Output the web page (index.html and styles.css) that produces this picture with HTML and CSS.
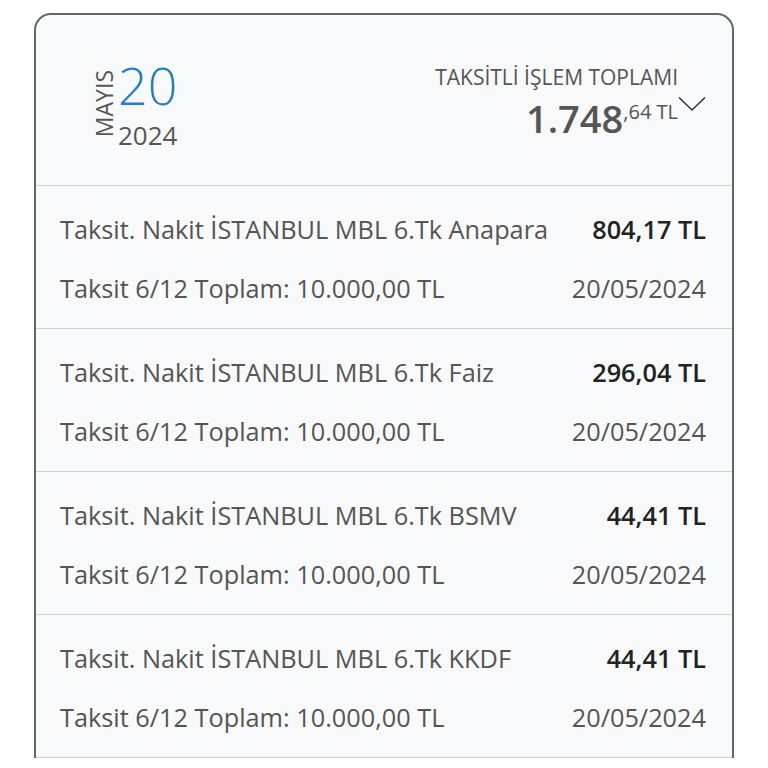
FILE: index.html
```html
<!DOCTYPE html>
<html lang="tr">
<head>
<meta charset="utf-8">
<link rel="stylesheet" href="styles.css">
</head>
<body>
<div class="card">
  <div class="header">
    <div class="date">
      <div class="month">MAYIS</div>
      <div class="daycol">
        <div class="day">20</div>
        <div class="year">2024</div>
      </div>
    </div>
    <div class="total">
      <div class="totaltext">
        <div class="title">TAKSİTLİ İŞLEM TOPLAMI</div>
        <div class="amount"><span class="big">1.748</span><span class="small">,64 TL</span></div>
      </div>
      <svg class="chev" width="28" height="16" viewBox="0 0 28 16"><polyline points="1,1.5 14,14 27,1.5" fill="none" stroke="#333" stroke-width="1.5"/></svg>
    </div>
  </div>
  <div class="row">
    <div class="line"><span class="desc">Taksit. Nakit İSTANBUL MBL 6.Tk Anapara</span><span class="val">804,17 TL</span></div>
    <div class="line"><span class="desc">Taksit 6/12 Toplam: 10.000,00 TL</span><span class="desc">20/05/2024</span></div>
  </div>
  <div class="row">
    <div class="line"><span class="desc">Taksit. Nakit İSTANBUL MBL 6.Tk Faiz</span><span class="val">296,04 TL</span></div>
    <div class="line"><span class="desc">Taksit 6/12 Toplam: 10.000,00 TL</span><span class="desc">20/05/2024</span></div>
  </div>
  <div class="row">
    <div class="line"><span class="desc">Taksit. Nakit İSTANBUL MBL 6.Tk BSMV</span><span class="val">44,41 TL</span></div>
    <div class="line"><span class="desc">Taksit 6/12 Toplam: 10.000,00 TL</span><span class="desc">20/05/2024</span></div>
  </div>
  <div class="row">
    <div class="line"><span class="desc">Taksit. Nakit İSTANBUL MBL 6.Tk KKDF</span><span class="val">44,41 TL</span></div>
    <div class="line"><span class="desc">Taksit 6/12 Toplam: 10.000,00 TL</span><span class="desc">20/05/2024</span></div>
  </div>
</div>
</body>
</html>
```
FILE: styles.css
```css
html, body {
  margin: 0;
  padding: 0;
  background: #ffffff;
  font-family: "Open Sans", "Noto Sans", sans-serif;
  color: #555;
}
body {
  height: 768px;
  overflow: hidden;
}
.card {
  box-sizing: border-box;
  width: 700px;
  margin: 13px 0 0 34px;
  border: 2px solid #666;
  border-bottom: none;
  border-radius: 17px 17px 0 0;
  background: #f8f9fa;
}
.header {
  display: flex;
  justify-content: space-between;
  align-items: flex-start;
  height: 171px;
  box-sizing: border-box;
  border-bottom: 1px solid #cfcfcf;
  padding: 0 26px 0 57px;
}
.date {
  display: flex;
  align-items: flex-start;
  margin-top: 44px;
}
.month {
  writing-mode: vertical-rl;
  transform: rotate(180deg);
  font-size: 23px;
  line-height: 23px;
  margin-top: 11px;
  margin-right: 2px;
  color: #555;
}
.daycol {
  display: flex;
  flex-direction: column;
}
.day {
  font-size: 52px;
  font-weight: 300;
  line-height: 52px;
  color: #2a7dc2;
}
.year {
  font-size: 26px;
  line-height: 26px;
  margin-top: 11px;
  color: #555;
}
.total {
  display: flex;
  align-items: flex-start;
  margin-top: 52px;
}
.totaltext {
  display: flex;
  flex-direction: column;
  align-items: flex-end;
}
.title {
  font-size: 21px;
  line-height: 21px;
  color: #555;
}
.amount {
  display: flex;
  align-items: flex-start;
  margin-top: 11px;
}
.big {
  font-size: 38px;
  line-height: 38px;
  font-weight: 600;
  color: #555;
}
.small {
  font-size: 20px;
  line-height: 20px;
  margin-top: 3px;
  color: #555;
}
.chev {
  display: block;
  margin-top: 29px;
  margin-left: 0;
}
.row {
  height: 143px;
  box-sizing: border-box;
  border-bottom: 1px solid #cfcfcf;
  padding: 27px 26px 0 24px;
  display: flex;
  flex-direction: column;
  gap: 27px;
}
.line {
  display: flex;
  justify-content: space-between;
  font-size: 25.3px;
  line-height: 32px;
}
.desc {
  color: #555;
}
.val {
  color: #222;
  font-weight: 600;
}
```
